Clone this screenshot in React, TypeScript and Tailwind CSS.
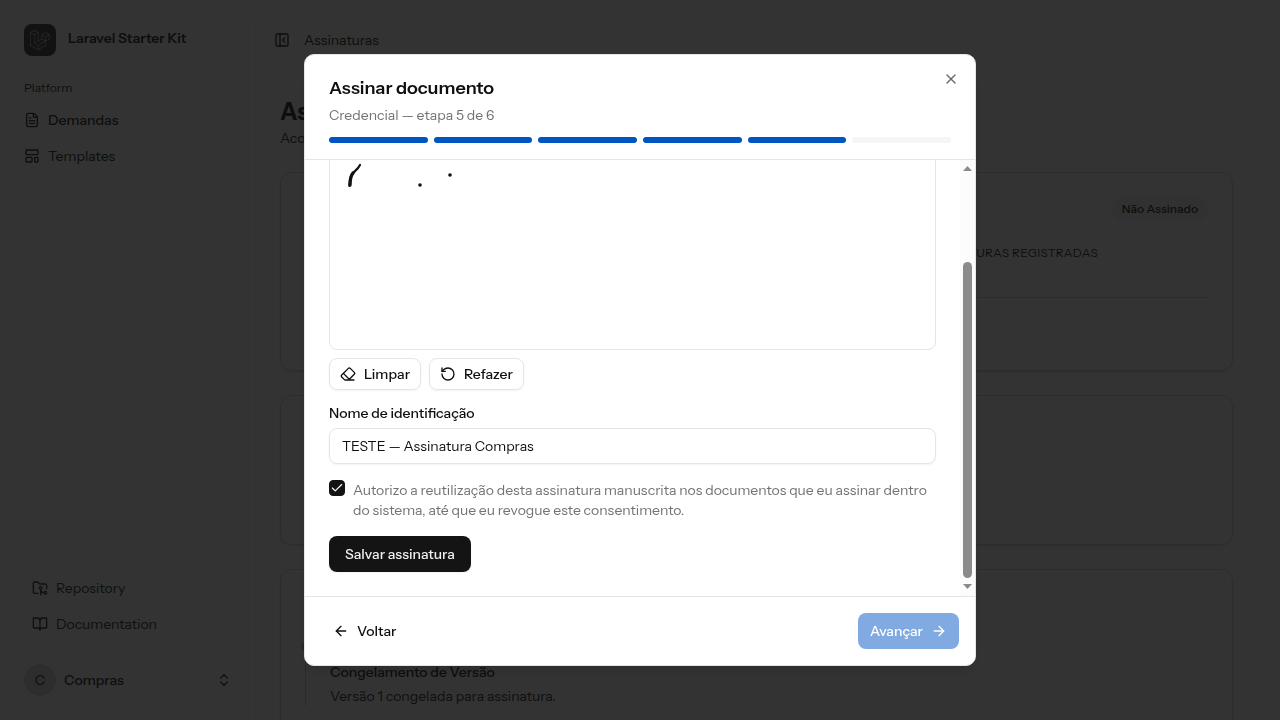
import { useLayoutEffect, useRef, useState } from "react";
import {
  ArrowLeft,
  ArrowRight,
  BookOpen,
  Check,
  ChevronsUpDown,
  Eraser,
  FileText,
  FolderGit2,
  LayoutTemplate,
  PanelLeftClose,
  RotateCcw,
  X,
} from "lucide-react";
import { FaLaravel } from "react-icons/fa";

const steps = [1, 2, 3, 4, 5, 6];
const currentStep = 5;

function Sidebar() {
  return (
    <aside className="flex w-64 shrink-0 flex-col p-4 text-sm text-[#464646]">
      <a href="#" className="flex items-center gap-3 p-2">
        <span className="flex size-8 items-center justify-center rounded-lg bg-[#5a5a5a] text-[#d4d4d4]">
          <FaLaravel className="size-5" />
        </span>
        <span className="pb-1 font-semibold leading-5">Laravel Starter Kit</span>
      </a>
      <nav className="mt-2 flex flex-col px-2">
        <span className="flex h-8 items-center text-xs">Platform</span>
        <a href="#" className="flex h-8 items-center gap-2 font-medium">
          <FileText className="size-4" />
          Demandas
        </a>
        <a href="#" className="mt-1 flex h-8 items-center gap-2">
          <LayoutTemplate className="size-4" />
          Templates
        </a>
      </nav>
      <nav className="mt-auto flex flex-col gap-1 px-4 text-[#505050]">
        <a href="#" className="flex h-8 items-center gap-2">
          <FolderGit2 className="size-4" />
          Repository
        </a>
        <a href="#" className="flex h-8 items-center gap-2">
          <BookOpen className="size-4" />
          Documentation
        </a>
      </nav>
      <button type="button" className="mt-4 flex h-12 items-center gap-2 px-2">
        <span className="flex size-8 items-center justify-center rounded-full bg-[#e0e0e0]">C</span>
        <span className="font-medium">Compras</span>
        <ChevronsUpDown className="ml-auto size-4" />
      </button>
    </aside>
  );
}

function Page() {
  return (
    <main className="mt-2 mr-[23px] flex min-w-0 flex-1 flex-col rounded-t-xl text-sm text-[#464646] ring-1 ring-[#f2f2f2]">
      <header className="flex h-16 shrink-0 items-center gap-3.5 border-b border-[#f7f7f7] px-[18px]">
        <PanelLeftClose className="size-4" />
        <span>Assinaturas</span>
      </header>
      <div className="flex flex-col gap-6 p-6">
        <div className="flex flex-col">
          <h1 className="text-2xl font-bold leading-8">Assinaturas</h1>
          <p className="text-[#505050]">Acompanhe</p>
        </div>
        <section className="flex h-[199px] flex-col rounded-xl border border-[#dcdcdc] p-6 shadow-sm">
          <span className="self-end rounded-full bg-[#f5f5f5] px-2.5 py-0.5 text-xs font-medium leading-5">
            Não Assinado
          </span>
          <div className="mt-6 flex justify-end pr-[110px] text-xs tracking-wide text-[#505050]">
            ASSINATURAS REGISTRADAS
          </div>
          <hr className="mt-9 border-[#dcdcdc]" />
        </section>
        <section className="h-[150px] rounded-xl border border-[#dcdcdc] shadow-sm" />
        <section className="rounded-xl border border-[#dcdcdc] px-6 pt-18 pb-8 shadow-sm">
          <div className="relative border-l border-[#d4d4d4] pt-5 pl-6">
            <span className="absolute top-0 -left-[5px] size-[9px] rounded-full bg-[#c8c8c8]" />
            <h2 className="font-medium">Congelamento de Versão</h2>
            <p className="mt-1 text-[#505050]">Versão 1 congelada para assinatura.</p>
          </div>
        </section>
      </div>
    </main>
  );
}

function SignatureForm() {
  const scroller = useRef<HTMLDivElement>(null);
  const [name, setName] = useState("TESTE — Assinatura Compras");
  const [consent, setConsent] = useState(true);

  useLayoutEffect(() => {
    if (scroller.current) scroller.current.scrollTop = scroller.current.scrollHeight;
  }, []);

  return (
    <div className="flex min-h-0 flex-1">
      <div ref={scroller} className="min-w-0 flex-1 overflow-y-auto p-6 [scrollbar-width:none]">
        <div className="flex flex-col gap-4">
          <div className="flex flex-col gap-2">
            <div className="flex h-71 items-end overflow-hidden rounded-lg border border-[#e5e5e5]">
              <svg viewBox="0 -1 605 190" className="w-full shrink-0 text-[#111]" role="img" aria-label="Assinatura">
                <path d="M19.5 26 C20 20 20 16 23 13 C26 10 28 9 30 5" fill="none" stroke="currentColor" strokeWidth="2.2" strokeLinecap="round" />
                <path d="M20 25 C20 20 20.5 16 23 13" fill="none" stroke="currentColor" strokeWidth="3.4" strokeLinecap="round" />
                <circle cx="90" cy="25" r="1.8" fill="currentColor" />
                <circle cx="120" cy="15" r="1.8" fill="currentColor" />
              </svg>
            </div>
            <div className="flex gap-2">
              <button type="button" className="flex h-8 items-center gap-2 rounded-lg border border-[#e5e5e5] px-2.5 font-medium shadow-xs">
                <Eraser className="size-4" />
                Limpar
              </button>
              <button type="button" className="flex h-8 items-center gap-2 rounded-lg border border-[#e5e5e5] px-2.5 font-medium shadow-xs">
                <RotateCcw className="size-4" />
                Refazer
              </button>
            </div>
          </div>
          <div className="flex flex-col gap-2">
            <label htmlFor="signature-name" className="font-medium leading-none">
              Nome de identificação
            </label>
            <input
              id="signature-name"
              value={name}
              onChange={(e) => setName(e.target.value)}
              className="h-9 w-full rounded-lg border border-[#e5e5e5] px-3 shadow-xs outline-none"
            />
          </div>
          <label className="flex items-start gap-2 leading-5 text-[#737373]">
            <span className="grid size-4 shrink-0">
              <input
                type="checkbox"
                checked={consent}
                onChange={(e) => setConsent(e.target.checked)}
                className="peer col-start-1 row-start-1 size-4 appearance-none rounded-sm border border-[#131313] checked:bg-[#131313]"
              />
              <Check className="pointer-events-none col-start-1 row-start-1 hidden size-3.5 place-self-center text-white peer-checked:block" />
            </span>
            <span>
              Autorizo a reutilização desta assinatura manuscrita nos documentos que eu assinar dentro do sistema, até
              que eu revogue este consentimento.
            </span>
          </label>
          <button type="button" className="h-9 self-start rounded-lg bg-[#141414] px-4 font-medium text-[#f0f0f0] shadow-xs">
            Salvar assinatura
          </button>
        </div>
      </div>
      <div className="flex w-[15px] shrink-0 flex-col items-center bg-[#fcfcfc] pt-1.5 pb-[7px] text-[#8b8b8b]" aria-hidden="true">
        <svg viewBox="0 0 9 5" className="h-[5px] w-[9px] shrink-0">
          <path d="M0 5 4.5 0 9 5Z" fill="currentColor" />
        </svg>
        <div className="flex w-[9px] flex-1 flex-col justify-end pt-[7px] pb-1.5">
          <div className="h-[79%] rounded-full bg-[#8b8b8b]" />
        </div>
        <svg viewBox="0 0 9 5" className="h-[5px] w-[9px] shrink-0">
          <path d="M0 0 4.5 5 9 0Z" fill="currentColor" />
        </svg>
      </div>
    </div>
  );
}

export default function App() {
  return (
    <div className="h-screen overflow-hidden bg-white font-['Instrument_Sans','Inter',sans-serif]">
      <div className="flex h-full">
        <Sidebar />
        <Page />
      </div>
      <div className="fixed inset-0 flex items-center justify-center bg-black/80">
        <div
          role="dialog"
          aria-modal="true"
          aria-labelledby="dialog-title"
          className="relative flex h-[85vh] w-full max-w-2xl flex-col overflow-hidden rounded-[10px] border border-[#e5e5e5] bg-white text-sm text-[#0f0f0f] shadow-lg"
        >
          <header className="flex flex-col border-b border-[#e5e5e5] px-6 pt-6 pb-4">
            <h2 id="dialog-title" className="text-lg font-semibold leading-none">
              Assinar documento
            </h2>
            <p className="mt-2 leading-5 text-[#737373]">Credencial — etapa 5 de 6</p>
            <div className="mt-3 flex gap-1.5">
              {steps.map((step) => (
                <span
                  key={step}
                  className={step <= currentStep ? "h-1.5 flex-1 rounded-full bg-[#0055c4]" : "h-1.5 flex-1 rounded-full bg-[#f5f5f5]"}
                />
              ))}
            </div>
          </header>
          <button type="button" aria-label="Fechar" className="absolute top-4 right-4 text-[#6b6b6b]">
            <X className="size-4" />
          </button>
          <SignatureForm />
          <footer className="flex justify-between border-t border-[#e5e5e5] p-4">
            <button type="button" className="flex h-9 items-center gap-2 rounded-lg px-3 font-medium">
              <ArrowLeft className="size-4" />
              Voltar
            </button>
            <button type="button" disabled className="flex h-9 items-center gap-2 rounded-lg bg-[#80aae1] px-3 font-medium text-white">
              Avançar
              <ArrowRight className="size-4" />
            </button>
          </footer>
        </div>
      </div>
    </div>
  );
}
